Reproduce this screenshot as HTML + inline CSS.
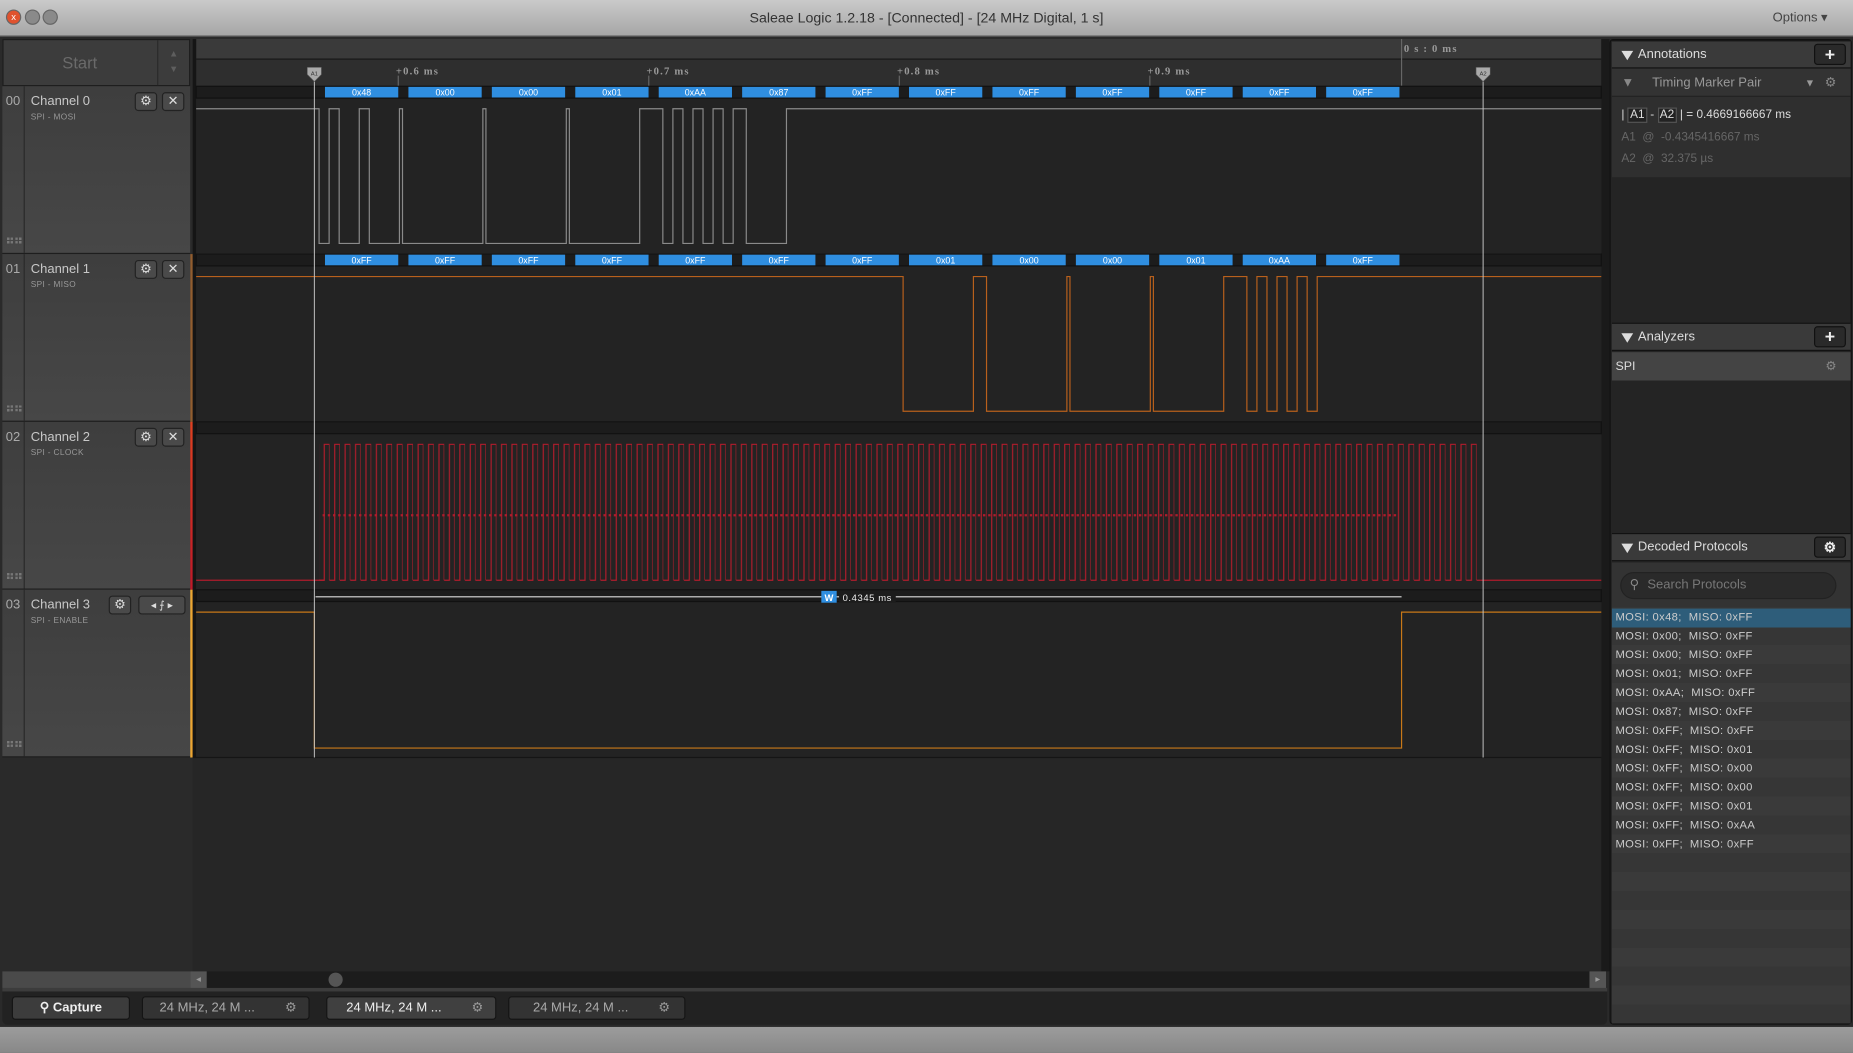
<!DOCTYPE html>
<html><head><meta charset="utf-8">
<style>
*{margin:0;padding:0;box-sizing:border-box}
html,body{width:1853px;height:1053px;overflow:hidden;background:#8c8c8c}
#w{position:absolute;left:0;top:0;width:1568px;height:891px;transform:scale(1.18176);transform-origin:0 0;font-family:"Liberation Sans",sans-serif;background:#2a2a2a;overflow:hidden}
.a{position:absolute}
.title{left:0;top:0;width:1568px;height:31px;background:linear-gradient(#cacaca,#a6a6a6);border-bottom:1px solid #666;text-align:center;font-size:12px;line-height:30px;color:#333}
.btnc{width:13px;height:13px;border-radius:50%;top:8px;border:1px solid #666}
.ch{left:2px;width:159px;height:142px;background:linear-gradient(#3e3e3e,#474747);border-bottom:1px solid #1e1e1e}
.num{left:0;top:0;width:19px;height:141px;border-right:1px solid #2a2a2a;color:#aaa;font-size:11px;text-align:center;padding-top:7px}
.nm{left:24px;top:7px;color:#c8c8c8;font-size:11px}
.sub{left:24px;top:23px;color:#999;font-size:7px;letter-spacing:.3px}
.ib{width:19px;height:16px;border:1px solid #222;border-radius:3px;background:#4a4a4a;color:#ddd;font-size:11px;text-align:center;line-height:14px}
.grip{left:4px;top:128px;width:12px;height:5px;border-top:2px dotted #777;border-bottom:2px dotted #777}
.hd{left:1364px;width:202px;height:24px;background:#3a3a3a;border-top:1px solid #111;border-bottom:1px solid #111;color:#ddd;font-size:11px;line-height:23px;padding-left:22px}
.tri{position:absolute;left:8px;top:8px;width:0;height:0;border-left:5px solid transparent;border-right:5px solid transparent;border-top:8px solid #ddd}
.plus{position:absolute;right:4px;top:2px;width:27px;height:18px;border:1px solid #111;border-radius:3px;background:#2a2a2a;color:#eee;text-align:center;font-size:15px;line-height:17px;font-weight:bold}
.row{left:1364px;width:202px;height:16px;font-size:9.5px;color:#ccc;line-height:16px;padding-left:3px;letter-spacing:.3px}
.tab{top:843px;height:20px;font-size:11px;color:#aaa;line-height:19px;border:1px solid #151515;border-radius:3px;background:#333}
</style></head><body><div id="w">
<div class="a title">Saleae Logic 1.2.18 - [Connected] - [24 MHz Digital, 1 s]</div>
<div class="a btnc" style="left:5px;background:#e0522e;color:#fff;font-size:8px;text-align:center;line-height:11px">x</div>
<div class="a btnc" style="left:21px;background:#8a8a8a"></div>
<div class="a btnc" style="left:36px;background:#8a8a8a"></div>
<div class="a" style="left:1500px;top:8px;font-size:11px;color:#444">Options ▾</div>

<div class="a" style="left:2px;top:33px;width:159px;height:40px;background:#3c3c3c;border:1px solid #1c1c1c"></div>
<div class="a" style="left:2px;top:34px;width:132px;height:38px;border-right:1px solid #2a2a2a;color:#6a6a6a;font-size:14px;text-align:center;line-height:38px">Start</div>
<div class="a" style="left:143px;top:41px;color:#5e5e5e;font-size:8px">▲</div>
<div class="a" style="left:143px;top:54px;color:#5e5e5e;font-size:8px">▼</div>

<div class="a ch" style="top:73px"><div class="a num">00</div><div class="a nm">Channel 0</div><div class="a sub">SPI - MOSI</div><div class="a ib" style="left:112px;top:5px">⚙</div><div class="a ib" style="left:135px;top:5px">✕</div><div class="a grip"></div></div>
<div class="a ch" style="top:215px"><div class="a num">01</div><div class="a nm">Channel 1</div><div class="a sub">SPI - MISO</div><div class="a ib" style="left:112px;top:5px">⚙</div><div class="a ib" style="left:135px;top:5px">✕</div><div class="a grip"></div></div>
<div class="a ch" style="top:357px"><div class="a num">02</div><div class="a nm">Channel 2</div><div class="a sub">SPI - CLOCK</div><div class="a ib" style="left:112px;top:5px">⚙</div><div class="a ib" style="left:135px;top:5px">✕</div><div class="a grip"></div></div>
<div class="a ch" style="top:499px"><div class="a num">03</div><div class="a nm">Channel 3</div><div class="a sub">SPI - ENABLE</div><div class="a ib" style="left:90px;top:5px">⚙</div><div class="a ib" style="left:115px;top:5px;width:40px;font-size:9px">◂ ⨍ ▸</div><div class="a grip"></div></div>
<div class="a" style="left:161px;top:73px;width:5px;height:142px;background:#2a2a2a"></div>
<div class="a" style="left:161px;top:215px;width:5px;height:142px;background:linear-gradient(90deg,#8a5a30,#b06a2a)"></div>
<div class="a" style="left:161px;top:357px;width:5px;height:142px;background:linear-gradient(#e04020,#c01828)"></div>
<div class="a" style="left:161px;top:499px;width:5px;height:142px;background:linear-gradient(90deg,#f0b040,#e08000)"></div>

<svg class="a" style="left:163px;top:33px" width="1199" height="789" viewBox="163 33 1199 789">
<defs>
<pattern id="clk" patternUnits="userSpaceOnUse" x="270" y="0" width="8.825" height="1000">
<path d="M0,491 H4.4 V376 H8.825" fill="none" stroke="#b01c2c" stroke-width="1"/>
<path d="M8.825,376 V491" stroke="#b01c2c" stroke-width="1"/>
</pattern>
</defs>
<rect x="163" y="33" width="1199" height="789" fill="#262626"/>
<rect x="166" y="33" width="1189" height="17" fill="#3a3a3a"/>
<rect x="166" y="50" width="1189" height="23" fill="#2e2e2e"/>
<line x1="166" y1="50" x2="1355" y2="50" stroke="#151515"/>
<rect x="163" y="33" width="3" height="608" fill="#151515"/>
<rect x="1355" y="33" width="7" height="789" fill="#1a1a1a"/>
<rect x="166" y="73" width="1189" height="568" fill="#232323"/>
<g font-family="Liberation Serif,serif" font-size="9" fill="#999" font-weight="bold" letter-spacing="1">
<text x="335" y="63">+0.6 ms</text><text x="547" y="63">+0.7 ms</text><text x="759" y="63">+0.8 ms</text><text x="971" y="63">+0.9 ms</text><text x="1188" y="44">0 s : 0 ms</text></g>
<g stroke="#666"><line x1="337" y1="64" x2="337" y2="73"/><line x1="549" y1="64" x2="549" y2="73"/><line x1="761" y1="64" x2="761" y2="73"/><line x1="973" y1="64" x2="973" y2="73"/><line x1="1186" y1="33" x2="1186" y2="73"/></g>
<g fill="#1c1c1c" stroke="#111"><rect x="166" y="73" width="1189" height="10"/><rect x="166" y="215" width="1189" height="10"/><rect x="166" y="357" width="1189" height="10"/><rect x="166" y="499" width="1189" height="10"/></g>
<g stroke="#151515"><line x1="166" y1="215" x2="1355" y2="215"/><line x1="166" y1="357" x2="1355" y2="357"/><line x1="166" y1="499" x2="1355" y2="499"/><line x1="163" y1="641" x2="1355" y2="641"/></g>
<g fill="#2f8ee0">
<rect x="275" y="73.5" width="62" height="9"/><rect x="345.6" y="73.5" width="62" height="9"/><rect x="416.2" y="73.5" width="62" height="9"/><rect x="486.8" y="73.5" width="62" height="9"/><rect x="557.4" y="73.5" width="62" height="9"/><rect x="628" y="73.5" width="62" height="9"/><rect x="698.6" y="73.5" width="62" height="9"/><rect x="769.2" y="73.5" width="62" height="9"/><rect x="839.8" y="73.5" width="62" height="9"/><rect x="910.4" y="73.5" width="62" height="9"/><rect x="981" y="73.5" width="62" height="9"/><rect x="1051.6" y="73.5" width="62" height="9"/><rect x="1122.2" y="73.5" width="62" height="9"/>
<rect x="275" y="215.5" width="62" height="9"/><rect x="345.6" y="215.5" width="62" height="9"/><rect x="416.2" y="215.5" width="62" height="9"/><rect x="486.8" y="215.5" width="62" height="9"/><rect x="557.4" y="215.5" width="62" height="9"/><rect x="628" y="215.5" width="62" height="9"/><rect x="698.6" y="215.5" width="62" height="9"/><rect x="769.2" y="215.5" width="62" height="9"/><rect x="839.8" y="215.5" width="62" height="9"/><rect x="910.4" y="215.5" width="62" height="9"/><rect x="981" y="215.5" width="62" height="9"/><rect x="1051.6" y="215.5" width="62" height="9"/><rect x="1122.2" y="215.5" width="62" height="9"/>
</g>
<g font-family="Liberation Sans,sans-serif" font-size="7.5" fill="#fff" text-anchor="middle">
<text x="306" y="81">0x48</text><text x="376.6" y="81">0x00</text><text x="447.2" y="81">0x00</text><text x="517.8" y="81">0x01</text><text x="588.4" y="81">0xAA</text><text x="659" y="81">0x87</text><text x="729.6" y="81">0xFF</text><text x="800.2" y="81">0xFF</text><text x="870.8" y="81">0xFF</text><text x="941.4" y="81">0xFF</text><text x="1012" y="81">0xFF</text><text x="1082.6" y="81">0xFF</text><text x="1153.2" y="81">0xFF</text>
<text x="306" y="223">0xFF</text><text x="376.6" y="223">0xFF</text><text x="447.2" y="223">0xFF</text><text x="517.8" y="223">0xFF</text><text x="588.4" y="223">0xFF</text><text x="659" y="223">0xFF</text><text x="729.6" y="223">0xFF</text><text x="800.2" y="223">0x01</text><text x="870.8" y="223">0x00</text><text x="941.4" y="223">0x00</text><text x="1012" y="223">0x01</text><text x="1082.6" y="223">0xAA</text><text x="1153.2" y="223">0xFF</text>
</g>
<path fill="none" stroke="#8a8a8a" stroke-width="1" d="M166,92 H270 V206 H278.5 V92 H287 V206 H304 V92 H312.5 V206 H338 V92 H340.6 V206 H408.6 V92 H411.2 V206 H479.2 V92 H481.8 V206 H541.3 V92 H560.9 V206 H569.4 V92 H577.9 V206 H586.4 V92 H594.9 V206 H603.4 V92 H611.9 V206 H620.4 V92 H631.5 V206 H665.5 V92 H1355"/>
<path fill="none" stroke="#b8601c" stroke-width="1" d="M166,234 H764.2 V348 H823.7 V234 H834.8 V348 H902.8 V234 H905.4 V348 H973.4 V234 H976 V348 H1035.5 V234 H1055.1 V348 H1063.6 V234 H1072.1 V348 H1080.6 V234 H1089.1 V348 H1097.6 V234 H1106.1 V348 H1114.6 V234 H1355"/>
<path fill="none" stroke="#b01c2c" d="M166,491 H274.4"/>
<rect x="270" y="370" width="983" height="126" fill="url(#clk)"/>
<path fill="none" stroke="#b01c2c" d="M1253,491 H1355"/>
<line x1="273" y1="436" x2="1183" y2="436" stroke="#b01c2c" stroke-width="2" stroke-dasharray="2,2.4"/>
<path fill="none" stroke="#c87818" stroke-width="1" d="M166,518 H266 V633 H1186 V518 H1355"/>
<g stroke="#c8c8c8" stroke-width="0.8"><line x1="266" y1="66" x2="266" y2="641"/><line x1="1255" y1="66" x2="1255" y2="641"/></g>
<path d="M260,57 h12 v6 l-6,6 l-6,-6z" fill="#aaa" stroke="#555" stroke-width=".5"/>
<path d="M1249,57 h12 v6 l-6,6 l-6,-6z" fill="#aaa" stroke="#555" stroke-width=".5"/>
<text x="266" y="64" font-size="5" text-anchor="middle" fill="#333" font-family="Liberation Sans">A1</text>
<text x="1255" y="64" font-size="5" text-anchor="middle" fill="#333" font-family="Liberation Sans">A2</text>
<line x1="267" y1="505" x2="1186" y2="505" stroke="#ddd" stroke-width="1"/>
<rect x="695" y="500" width="13" height="10" fill="#2f8ee0"/>
<text x="701.5" y="508.5" font-size="8" font-weight="bold" text-anchor="middle" fill="#fff" font-family="Liberation Sans">W</text>
<rect x="710" y="500" width="48" height="10" fill="#1c1c1c"/>
<text x="713" y="508.5" font-size="8" fill="#eee" font-family="Liberation Sans" letter-spacing=".5">0.4345 ms</text>
</svg>

<div class="a" style="left:2px;top:822px;width:159px;height:14px;background:#4a4a4a"></div>
<div class="a" style="left:161px;top:822px;width:14px;height:14px;background:#555;color:#999;font-size:8px;line-height:14px;text-align:center">◂</div>
<div class="a" style="left:175px;top:822px;width:1170px;height:14px;background:#1c1c1c"></div>
<div class="a" style="left:278px;top:823px;width:12px;height:12px;border-radius:50%;background:#555"></div>
<div class="a" style="left:1345px;top:822px;width:14px;height:14px;background:#555;color:#999;font-size:8px;line-height:14px;text-align:center">▸</div>
<div class="a" style="left:2px;top:836px;width:1358px;height:3px;background:#3c3c3c"></div>
<div class="a" style="left:2px;top:839px;width:1358px;height:28px;background:#222;border-radius:0 0 4px 4px"></div>
<div class="a tab" style="left:10px;width:100px;background:#3c3c3c;color:#eee;text-align:center;font-weight:bold">⚲ Capture</div>
<div class="a tab" style="left:120px;width:142px;padding-left:14px">24 MHz, 24 M ...<span style="position:absolute;right:10px;color:#999">⚙</span></div>
<div class="a tab" style="left:276px;width:144px;padding-left:16px;background:#404040;color:#eee">24 MHz, 24 M ...<span style="position:absolute;right:10px;color:#999">⚙</span></div>
<div class="a tab" style="left:430px;width:150px;padding-left:20px">24 MHz, 24 M ...<span style="position:absolute;right:12px;color:#999">⚙</span></div>
<div class="a" style="left:0;top:869px;width:1568px;height:22px;background:linear-gradient(#9c9c9c,#888)"></div>

<div class="a" style="left:1362px;top:33px;width:205px;height:834px;background:#242424;border:1px solid #111;border-radius:3px"></div>
<div class="a hd" style="top:34px"><span class="tri"></span>Annotations<span class="plus">+</span></div>
<div class="a" style="left:1364px;top:58px;width:202px;height:92px;background:#2f2f2f"></div>
<div class="a" style="left:1364px;top:58px;width:202px;height:24px;background:#333;border-bottom:1px solid #222;color:#999;font-size:11px;line-height:24px;padding-left:34px">Timing Marker Pair<span style="position:absolute;left:8px;color:#888">▼</span><span style="position:absolute;right:30px;color:#999;font-size:9px">▼</span><span style="position:absolute;right:12px;color:#888">⚙</span></div>
<div class="a" style="left:1372px;top:92px;font-size:10px;color:#ddd">| <span style="border:1px solid #555;background:#222;padding:0 1px">A1</span> - <span style="border:1px solid #555;background:#222;padding:0 1px">A2</span> | = 0.4669166667 ms</div>
<div class="a" style="left:1372px;top:111px;font-size:10px;color:#666">A1&nbsp; @&nbsp; -0.4345416667 ms</div>
<div class="a" style="left:1372px;top:129px;font-size:10px;color:#666">A2&nbsp; @&nbsp; 32.375 µs</div>
<div class="a hd" style="top:273px"><span class="tri"></span>Analyzers<span class="plus">+</span></div>
<div class="a" style="left:1364px;top:298px;width:202px;height:24px;background:#444;color:#ddd;font-size:10.5px;line-height:24px;padding-left:3px">SPI<span style="position:absolute;right:12px;color:#888">⚙</span></div>
<div class="a hd" style="top:451px"><span class="tri"></span>Decoded Protocols<span class="plus" style="font-size:12px">⚙</span></div>
<div class="a" style="left:1364px;top:476px;width:202px;height:38px;background:#333"></div>
<div class="a" style="left:1371px;top:484px;width:183px;height:23px;border-radius:12px;background:#2a2a2a;border:1px solid #222;color:#777;font-size:11px;line-height:21px;padding-left:22px">Search Protocols<span style="position:absolute;left:7px;color:#888">⚲</span></div>
<div class="a" style="left:1364px;top:514px;width:202px;height:352px;background:repeating-linear-gradient(#3a3a3a 0 16px,#363636 16px 32px)"></div>
<div class="a row" style="top:515px;background:#2e5d7a">MOSI: 0x48;&nbsp; MISO: 0xFF</div>
<div class="a row" style="top:531px">MOSI: 0x00;&nbsp; MISO: 0xFF</div>
<div class="a row" style="top:547px">MOSI: 0x00;&nbsp; MISO: 0xFF</div>
<div class="a row" style="top:563px">MOSI: 0x01;&nbsp; MISO: 0xFF</div>
<div class="a row" style="top:579px">MOSI: 0xAA;&nbsp; MISO: 0xFF</div>
<div class="a row" style="top:595px">MOSI: 0x87;&nbsp; MISO: 0xFF</div>
<div class="a row" style="top:611px">MOSI: 0xFF;&nbsp; MISO: 0xFF</div>
<div class="a row" style="top:627px">MOSI: 0xFF;&nbsp; MISO: 0x01</div>
<div class="a row" style="top:643px">MOSI: 0xFF;&nbsp; MISO: 0x00</div>
<div class="a row" style="top:659px">MOSI: 0xFF;&nbsp; MISO: 0x00</div>
<div class="a row" style="top:675px">MOSI: 0xFF;&nbsp; MISO: 0x01</div>
<div class="a row" style="top:691px">MOSI: 0xFF;&nbsp; MISO: 0xAA</div>
<div class="a row" style="top:707px">MOSI: 0xFF;&nbsp; MISO: 0xFF</div>
</div></body></html>
